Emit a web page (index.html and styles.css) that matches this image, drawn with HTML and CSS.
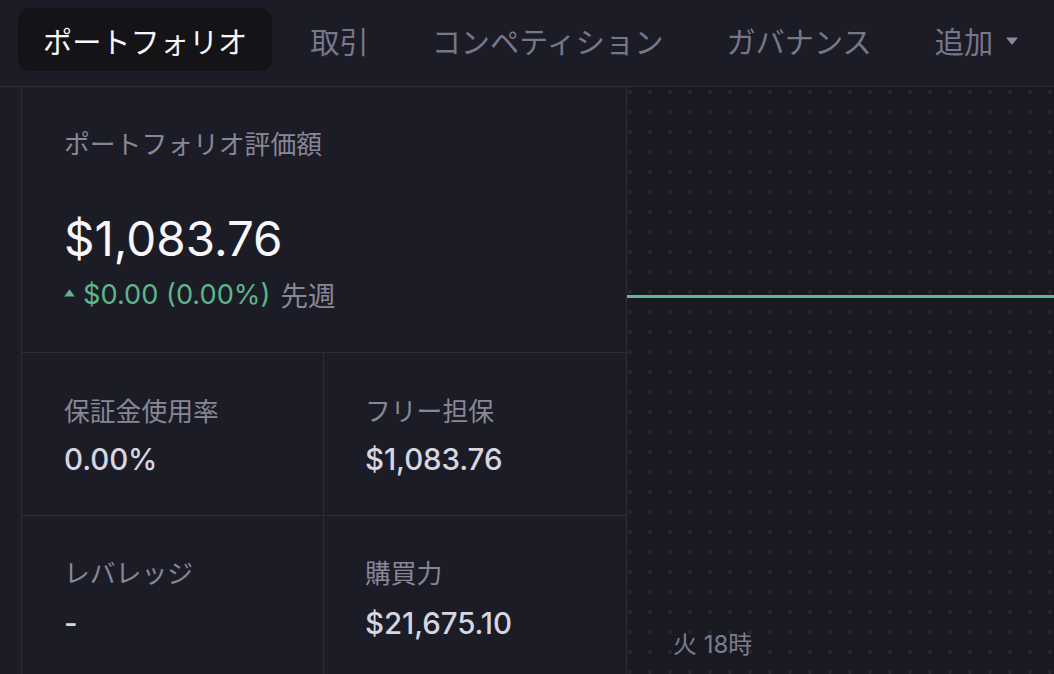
FILE: index.html
```html
<!DOCTYPE html>
<html lang="ja">
<head>
<meta charset="utf-8">
<title>ポートフォリオ</title>
<link rel="stylesheet" href="styles.css">
</head>
<body>
<header class="topnav">
  <a class="nav-item active">ポートフォリオ</a>
  <a class="nav-item">取引</a>
  <a class="nav-item">コンペティション</a>
  <a class="nav-item">ガバナンス</a>
  <a class="nav-item more">追加<svg class="caret" width="12" height="8" viewBox="0 0 12 8"><path d="M1 0.5 H11 Q11.8 0.5 11.3 1.3 L6.6 7.2 Q6 7.9 5.4 7.2 L0.7 1.3 Q0.2 0.5 1 0.5 Z" fill="#8a8a9c"/></svg></a>
</header>
<main class="layout">
  <div class="gutter"></div>
  <section class="panel">
    <div class="summary">
      <div class="label">ポートフォリオ評価額</div>
      <div class="big-value">$1,083.76</div>
      <div class="change">
        <svg class="tri" width="11" height="8" viewBox="0 0 11 8"><path d="M5.5 0.3 L10.8 7.6 H0.2 Z" fill="#5db58c"/></svg>
        <span class="pos">$0.00 (0.00%)</span>
        <span class="period">先週</span>
      </div>
    </div>
    <div class="stats">
      <div class="stat">
        <div class="label">保証金使用率</div>
        <div class="stat-value">0.00%</div>
      </div>
      <div class="stat">
        <div class="label">フリー担保</div>
        <div class="stat-value">$1,083.76</div>
      </div>
      <div class="stat">
        <div class="label">レバレッジ</div>
        <div class="stat-value">-</div>
      </div>
      <div class="stat">
        <div class="label">購買力</div>
        <div class="stat-value">$21,675.10</div>
      </div>
    </div>
  </section>
  <section class="chart">
    <div class="chart-line"></div>
    <div class="axis-label">火 18時</div>
  </section>
</main>
</body>
</html>
```

FILE: styles.css
```css
* { box-sizing: border-box; }
html, body { margin: 0; padding: 0; }
body {
  background: #1c1c26;
  font-family: Inter, "Noto Sans CJK JP", sans-serif;
  color: #f3f3f6;
  width: 1054px;
  height: 674px;
  overflow: hidden;
}
.topnav {
  height: 87px;
  border-bottom: 1px solid #2d2d3a;
  display: flex;
  align-items: flex-start;
  padding: 8px 0 0 18px;
  gap: 13px;
}
.nav-item {
  height: 63px;
  padding: 0 25px;
  display: flex;
  align-items: center;
  font-family: "Noto Sans CJK JP", sans-serif;
  font-size: 29.2px;
  color: #77778a;
  border-radius: 12px;
  white-space: nowrap;
}
.nav-item.active {
  background: #131318;
  color: #f7f7f9;
}
.nav-item.more .caret { margin-left: 13px; margin-top: 2px; }
.layout {
  display: flex;
  height: 587px;
}
.gutter {
  width: 22px;
  border-right: 1px solid #2d2d3a;
}
.panel {
  width: 605px;
  border-right: 1px solid #2d2d3a;
  display: flex;
  flex-direction: column;
}
.summary {
  padding: 41px 42px 43px;
  border-bottom: 1px solid #2d2d3a;
}
.label {
  font-family: "Noto Sans CJK JP", sans-serif;
  font-size: 25.8px;
  line-height: 30px;
  color: #878797;
}
.big-value {
  margin-top: 53px;
  font-size: 47.5px;
  line-height: 56px;
  font-weight: 400;
  color: #f7f7f9;
}
.change {
  margin-top: 12px;
  display: flex;
  align-items: center;
  height: 30px;
  font-size: 27.2px;
}
.tri { margin-right: 8px; margin-top: -2px; }
.pos { color: #5db58c; }
.period {
  margin-left: 10px;
  color: #878797;
  font-family: "Noto Sans CJK JP", sans-serif;
  font-size: 27.5px;
}
.stats {
  display: grid;
  grid-template-columns: 302px 1fr;
  flex: 1;
}
.stat {
  height: 163px;
  padding: 42px 42px 0 42px;
  border-bottom: 1px solid #2d2d3a;
}
.stat:nth-child(odd) { border-right: 1px solid #2d2d3a; }
.stat:nth-child(even) { padding-left: 41px; }
.stat:nth-child(n+3) { padding-top: 41px; }
.stat:nth-child(n+3) .stat-value { margin-top: 19px; }
.stat-value {
  margin-top: 17px;
  font-size: 29.5px;
  line-height: 34px;
  font-weight: 500;
  color: #d6d6e0;
  letter-spacing: -0.1px;
}
.chart {
  flex: 1;
  position: relative;
  background-color: #191921;
  background-image: radial-gradient(circle, #272732 1.7px, transparent 2.4px);
  background-size: 20px 20px;
  background-position: -7px -5px;
}
.chart-line {
  position: absolute;
  left: 0;
  right: 0;
  top: 208px;
  height: 3px;
  background: #62b791;
}
.axis-label {
  position: absolute;
  left: 46px;
  top: 544px;
  font-size: 24px;
  line-height: 28px;
  color: #7c7c8e;
}
```
